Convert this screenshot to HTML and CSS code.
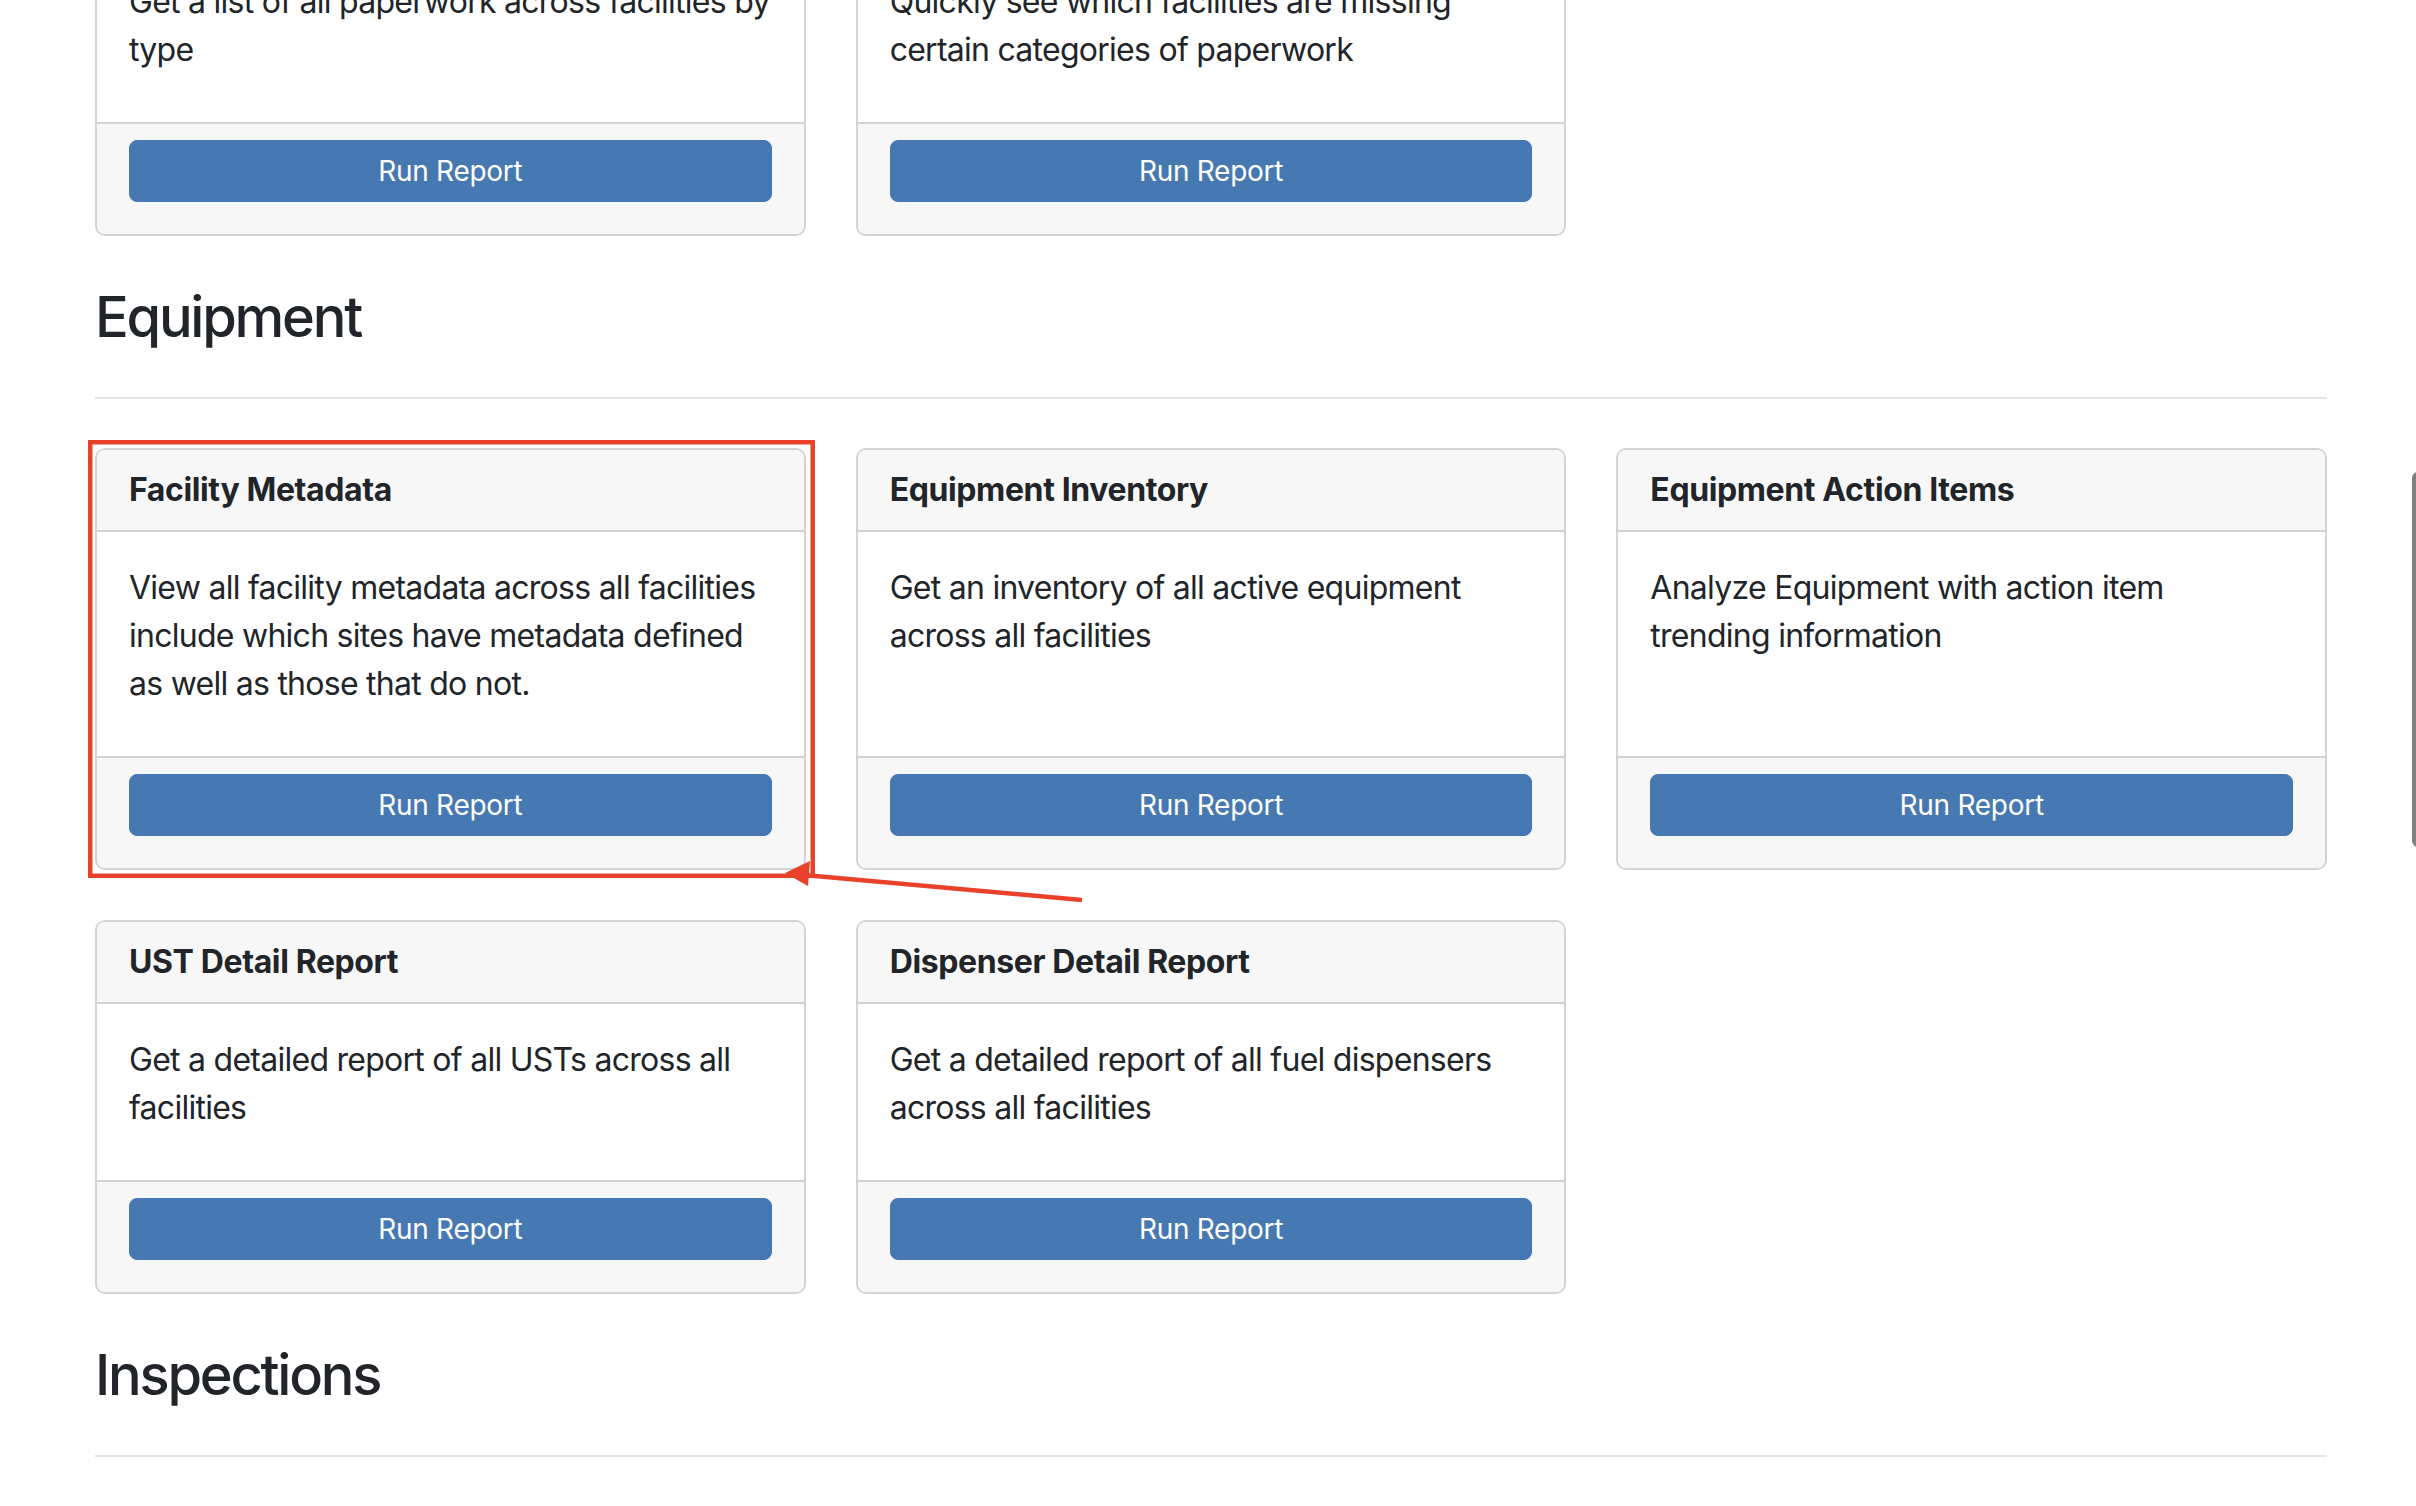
FILE: index.html
```html
<!DOCTYPE html>
<html lang="en">
<head>
<meta charset="utf-8">
<title>Reports</title>
<link rel="stylesheet" href="styles.css">
</head>
<body>
<main class="page">
  <section class="section section-first">
    <div class="card-grid">
      <div class="card">
        <div class="card-header">Paperwork by Type</div>
        <div class="card-body"><p class="card-text">Get a list of all paperwork across facilities by type</p></div>
        <div class="card-footer"><button class="btn">Run Report</button></div>
      </div>
      <div class="card">
        <div class="card-header">Missing Paperwork</div>
        <div class="card-body"><p class="card-text">Quickly see which facilities are missing certain categories of paperwork</p></div>
        <div class="card-footer"><button class="btn">Run Report</button></div>
      </div>
    </div>
  </section>

  <section class="section">
    <h3 class="section-title">Equipment</h3>
    <hr class="section-rule">
    <div class="card-grid">
      <div class="card">
        <div class="card-header">Facility Metadata</div>
        <div class="card-body"><p class="card-text">View all facility metadata across all facilities include which sites have metadata defined as well as those that do not.</p></div>
        <div class="card-footer"><button class="btn">Run Report</button></div>
      </div>
      <div class="card">
        <div class="card-header">Equipment Inventory</div>
        <div class="card-body"><p class="card-text">Get an inventory of all active equipment across all facilities</p></div>
        <div class="card-footer"><button class="btn">Run Report</button></div>
      </div>
      <div class="card">
        <div class="card-header">Equipment Action Items</div>
        <div class="card-body"><p class="card-text">Analyze Equipment with action item<br>trending information</p></div>
        <div class="card-footer"><button class="btn">Run Report</button></div>
      </div>
      <div class="card">
        <div class="card-header">UST Detail Report</div>
        <div class="card-body"><p class="card-text">Get a detailed report of all USTs across all facilities</p></div>
        <div class="card-footer"><button class="btn">Run Report</button></div>
      </div>
      <div class="card">
        <div class="card-header">Dispenser Detail Report</div>
        <div class="card-body"><p class="card-text">Get a detailed report of all fuel dispensers across all facilities</p></div>
        <div class="card-footer"><button class="btn">Run Report</button></div>
      </div>
    </div>
  </section>

  <section class="section">
    <h3 class="section-title">Inspections</h3>
    <hr class="section-rule">
    <div class="card-grid">
      <div class="card">
        <div class="card-header">Inspection Summary</div>
        <div class="card-body"><p class="card-text">Summary of inspections across all facilities</p></div>
        <div class="card-footer"><button class="btn">Run Report</button></div>
      </div>
      <div class="card">
        <div class="card-header">Inspection Results</div>
        <div class="card-body"><p class="card-text">Detailed inspection results</p></div>
        <div class="card-footer"><button class="btn">Run Report</button></div>
      </div>
      <div class="card">
        <div class="card-header">Inspection Schedule</div>
        <div class="card-body"><p class="card-text">Upcoming inspections</p></div>
        <div class="card-footer"><button class="btn">Run Report</button></div>
      </div>
    </div>
  </section>
</main>

<svg class="annotation" width="2416" height="1506" viewBox="0 0 2416 1506" aria-hidden="true">
  <rect x="90.25" y="442.25" width="722.5" height="433.5" fill="none" stroke="#e9412a" stroke-width="4.5"/>
  <line x1="1082" y1="900" x2="804" y2="875" stroke="#e9412a" stroke-width="4.5"/>
  <polygon points="785,873 810,861 808,886" fill="#e9412a"/>
</svg>
<div class="scroll-thumb"></div>
</body>
</html>
```

FILE: styles.css
```css
* { box-sizing: border-box; }

html, body {
  margin: 0;
  padding: 0;
  background: #ffffff;
  overflow: hidden;
}

body {
  width: 2416px;
  height: 1506px;
  position: relative;
  font-family: "Inter", "Liberation Sans", sans-serif;
  color: #212529;
  font-size: 32px;
  line-height: 48px;
}

.page {
  width: 2232px;
  margin-left: 95px;
}

.section {
  padding-top: 48px;
}

.section-first {
  padding-top: 0;
  margin-top: -138px;
}

.section-title {
  margin: 0;
  font-size: 56px;
  line-height: 67px;
  font-weight: 500;
  letter-spacing: -0.04em;
}

.section-rule {
  margin: 46px 0 49px;
  border: 0;
  height: 2px;
  background: #e1e4e7;
}

.card-grid {
  display: grid;
  grid-template-columns: repeat(3, 1fr);
  column-gap: 50px;
  row-gap: 50px;
}

.card {
  display: flex;
  flex-direction: column;
  border: 2px solid #d3d3d3;
  border-radius: 10px;
  background: #ffffff;
  overflow: hidden;
}

.card-header {
  padding: 16px 32px;
  background: #f7f7f7;
  border-bottom: 2px solid #d3d3d3;
  font-weight: 700;
  letter-spacing: -0.012em;
}

.card-body {
  flex: 1;
  padding: 32px 32px;
}

.card-text {
  margin: 0 0 16px;
  letter-spacing: -0.023em;
}

.card-footer {
  padding: 16px 32px;
  background: #f7f7f7;
  border-top: 2px solid #d3d3d3;
}

.btn {
  display: block;
  width: 100%;
  margin: 0 0 16px;
  padding: 9px 16px;
  border: 1px solid #4679b1;
  border-radius: 8px;
  background: #4679b1;
  color: #ffffff;
  font-family: inherit;
  font-size: 28px;
  line-height: 42px;
  letter-spacing: -0.01em;
  text-align: center;
}

.annotation {
  position: absolute;
  left: 0;
  top: 0;
  pointer-events: none;
}

.scroll-thumb {
  position: absolute;
  left: 2412px;
  top: 472px;
  width: 12px;
  height: 375px;
  border-radius: 6px;
  background: #808080;
}
```
